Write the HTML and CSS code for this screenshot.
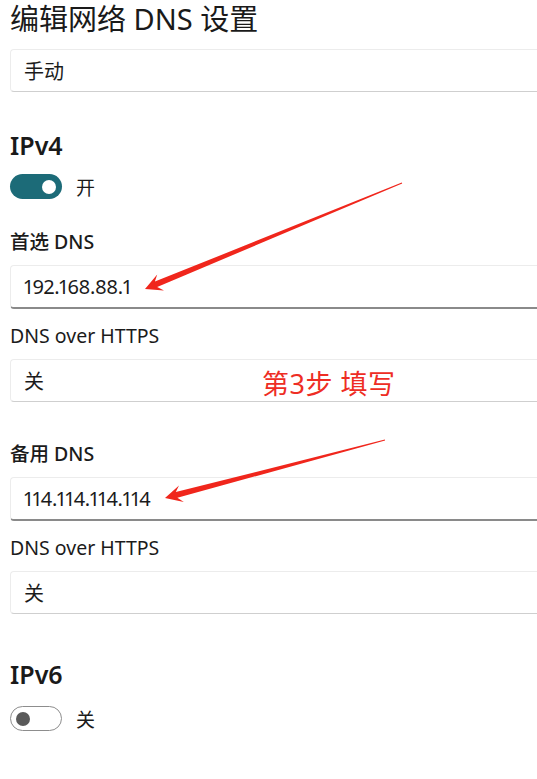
FILE: index.html
```html
<!DOCTYPE html>
<html lang="zh-CN">
<head>
<meta charset="utf-8">
<title>编辑网络 DNS 设置</title>
<link rel="stylesheet" href="styles.css">
</head>
<body>
<main class="page">
  <h1 class="title">编辑网络 DNS 设置</h1>
  <div class="box select first">手动</div>

  <section class="ip ipv4">
    <h2 class="ip-title">IPv4</h2>
    <div class="switch-row">
      <span class="switch on"><span class="knob"></span></span>
      <span class="switch-label">开</span>
    </div>
    <div class="field f-pref">
      <div class="label strong">首选 DNS</div>
      <div class="box input">192.168.88.1</div>
    </div>
    <div class="field f-doh">
      <div class="label">DNS over HTTPS</div>
      <div class="box select">关</div>
    </div>
    <div class="field f-alt">
      <div class="label strong">备用 DNS</div>
      <div class="box input">114.114.114.114</div>
    </div>
    <div class="field f-doh">
      <div class="label">DNS over HTTPS</div>
      <div class="box select">关</div>
    </div>
  </section>

  <section class="ip ipv6">
    <h2 class="ip-title">IPv6</h2>
    <div class="switch-row">
      <span class="switch off"><span class="knob"></span></span>
      <span class="switch-label">关</span>
    </div>
  </section>
</main>

<div class="note">第3步 填写</div>
<svg class="arrows" width="537" height="779" viewBox="0 0 537 779" xmlns="http://www.w3.org/2000/svg">
  <polygon fill="#f0261c" points="145,289 164,290.5 157.2,287 402.2,183.4 401.8,182.6 154.9,281.6 157.2,274.5"/>
  <polygon fill="#f0261c" points="165,498 183.8,502 177.4,497.8 385.1,440.4 384.9,439.6 175.8,492 179,485.4"/>
</svg>
</body>
</html>
```

FILE: styles.css
```css
html, body {
  margin: 0;
  padding: 0;
  background: #ffffff;
  overflow: hidden;
}

body {
  width: 537px;
  height: 779px;
  position: relative;
  font-family: "Noto Sans", "Noto Sans CJK SC", sans-serif;
  color: #1b1b1b;
}

.page {
  padding: 1px 0 0 10px;
}

.title {
  margin: 0;
  font-size: 29px;
  line-height: 35px;
  font-weight: 400;
  color: #1a1a1a;
}

.box {
  box-sizing: border-box;
  width: 527px;
  margin-right: -30px;
  height: 43px;
  display: flex;
  align-items: center;
  padding-left: 13px;
  font-size: 20px;
  font-variant-numeric: proportional-nums;
  color: #1b1b1b;
  background: #ffffff;
  border: 1px solid #ececec;
  border-right: none;
  border-bottom-color: #cfcfcf;
  border-radius: 4px 0 0 4px;
}

.box.input {
  height: 44px;
  border-bottom: 2px solid #8a8a8a;
  letter-spacing: -0.4px;
}

.box.first {
  margin-top: 13px;
}

.ip-title {
  margin: 0;
  font-size: 25px;
  line-height: 32px;
  font-weight: 600;
  color: #1a1a1a;
}

.ipv4 {
  margin-top: 37px;
}

.ipv6 {
  margin-top: 44px;
}

.switch-row {
  display: flex;
  align-items: center;
  gap: 14px;
  margin-top: 13px;
  height: 25px;
}

.ipv6 .switch-row {
  margin-top: 16px;
}

.switch {
  box-sizing: border-box;
  width: 52px;
  height: 25px;
  border-radius: 13px;
  display: flex;
  align-items: center;
}

.switch.on {
  background: #1c6b78;
  justify-content: flex-end;
  padding-right: 6px;
}

.switch.on .knob {
  width: 14px;
  height: 14px;
  border-radius: 50%;
  background: #ffffff;
}

.switch.off {
  border: 1.5px solid #8d8d8d;
  padding-left: 5px;
}

.switch.off .knob {
  width: 14px;
  height: 14px;
  border-radius: 50%;
  background: #5a5a5a;
}

.switch-label {
  font-size: 19px;
  color: #1b1b1b;
}

.label {
  font-size: 19.5px;
  line-height: 26px;
  color: #1b1b1b;
  margin-bottom: 10px;
}

.label.strong {
  font-weight: 500;
}

.f-pref {
  margin-top: 30px;
}

.f-doh {
  margin-top: 14px;
}

.f-alt {
  margin-top: 39px;
}

.note {
  position: absolute;
  left: 262px;
  top: 366px;
  font-size: 27px;
  line-height: 36px;
  letter-spacing: 0.5px;
  color: #ee2d24;
  white-space: nowrap;
}

.arrows {
  position: absolute;
  left: 0;
  top: 0;
  pointer-events: none;
}
```
